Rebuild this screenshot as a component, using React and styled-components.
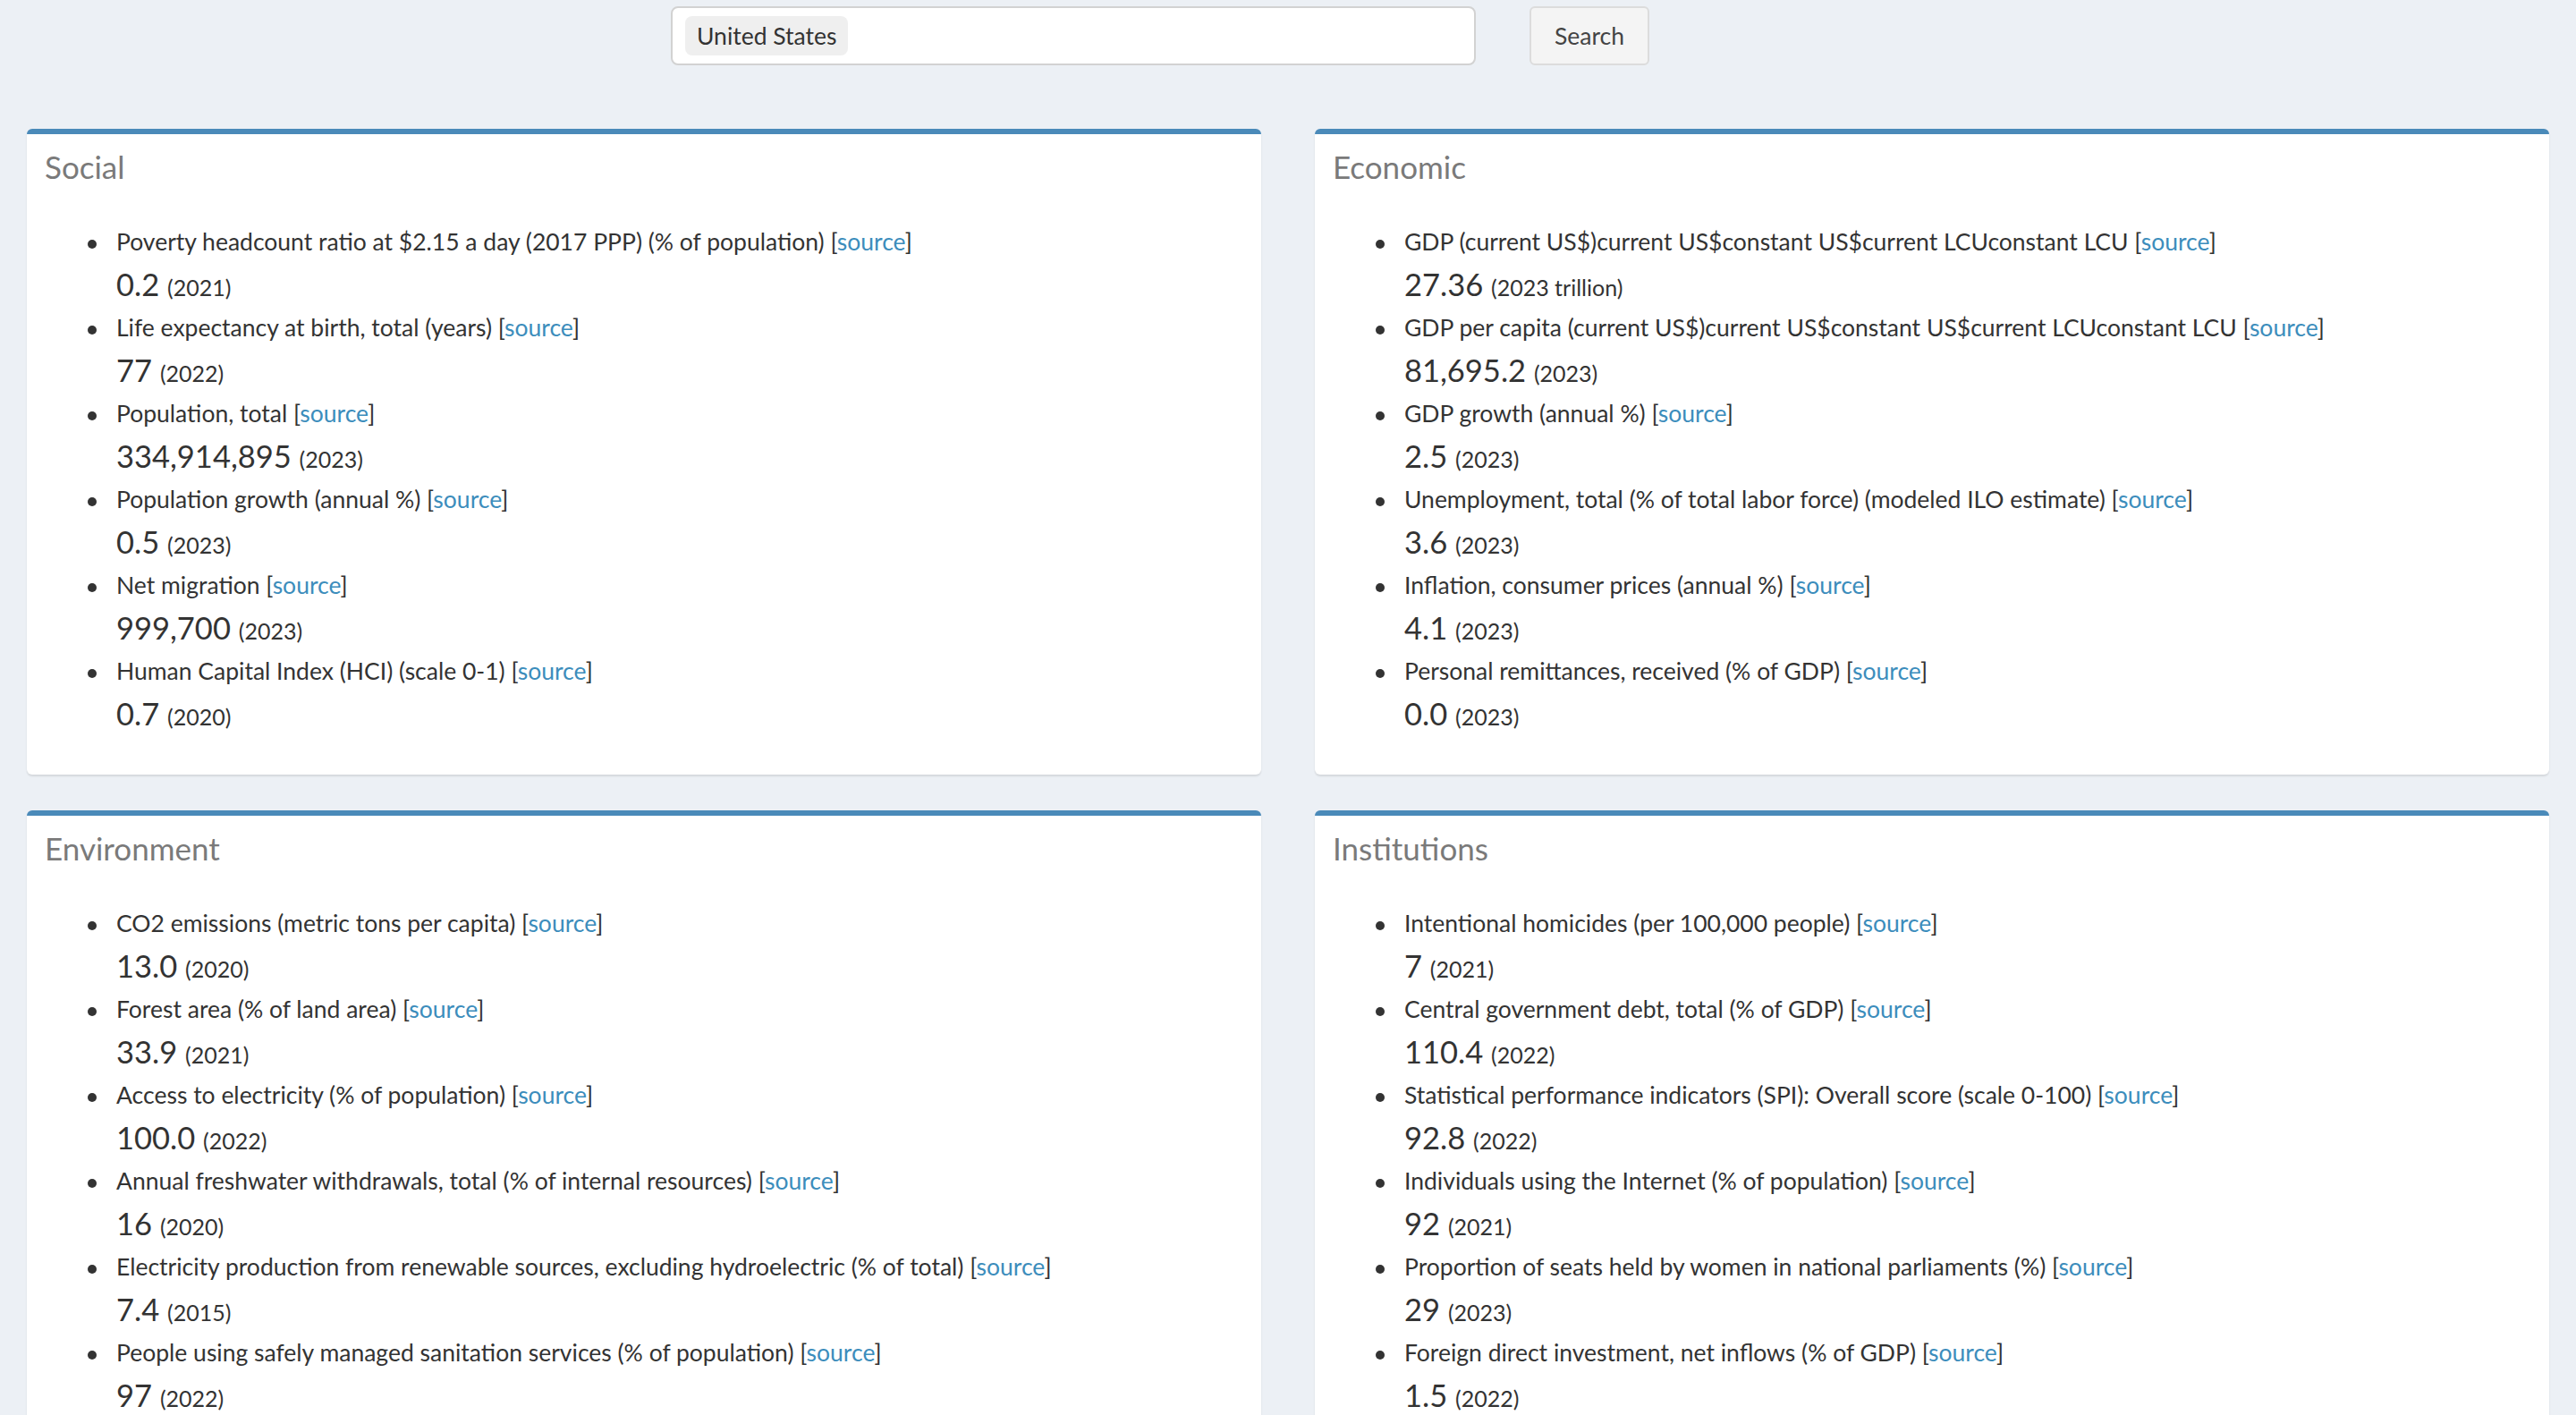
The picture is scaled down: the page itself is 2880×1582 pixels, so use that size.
import styled, { createGlobalStyle } from 'styled-components'

const GlobalStyle = createGlobalStyle`
  html, body {
    margin: 0;
    padding: 0;
    background: #ecf0f5;
  }
  body {
    font-family: Lato, "Open Sans", sans-serif;
    color: #333;
  }
`

const sections = [
  {
    title: 'Social',
    items: [
      { label: 'Poverty headcount ratio at $2.15 a day (2017 PPP) (% of population)', value: '0.2', note: '2021' },
      { label: 'Life expectancy at birth, total (years)', value: '77', note: '2022' },
      { label: 'Population, total', value: '334,914,895', note: '2023' },
      { label: 'Population growth (annual %)', value: '0.5', note: '2023' },
      { label: 'Net migration', value: '999,700', note: '2023' },
      { label: 'Human Capital Index (HCI) (scale 0-1)', value: '0.7', note: '2020' },
    ],
  },
  {
    title: 'Economic',
    items: [
      { label: 'GDP (current US$)current US$constant US$current LCUconstant LCU', value: '27.36', note: '2023 trillion' },
      { label: 'GDP per capita (current US$)current US$constant US$current LCUconstant LCU', value: '81,695.2', note: '2023' },
      { label: 'GDP growth (annual %)', value: '2.5', note: '2023' },
      { label: 'Unemployment, total (% of total labor force) (modeled ILO estimate)', value: '3.6', note: '2023' },
      { label: 'Inflation, consumer prices (annual %)', value: '4.1', note: '2023' },
      { label: 'Personal remittances, received (% of GDP)', value: '0.0', note: '2023' },
    ],
  },
  {
    title: 'Environment',
    items: [
      { label: 'CO2 emissions (metric tons per capita)', value: '13.0', note: '2020' },
      { label: 'Forest area (% of land area)', value: '33.9', note: '2021' },
      { label: 'Access to electricity (% of population)', value: '100.0', note: '2022' },
      { label: 'Annual freshwater withdrawals, total (% of internal resources)', value: '16', note: '2020' },
      { label: 'Electricity production from renewable sources, excluding hydroelectric (% of total)', value: '7.4', note: '2015' },
      { label: 'People using safely managed sanitation services (% of population)', value: '97', note: '2022' },
    ],
  },
  {
    title: 'Institutions',
    items: [
      { label: 'Intentional homicides (per 100,000 people)', value: '7', note: '2021' },
      { label: 'Central government debt, total (% of GDP)', value: '110.4', note: '2022' },
      { label: 'Statistical performance indicators (SPI): Overall score (scale 0-100)', value: '92.8', note: '2022' },
      { label: 'Individuals using the Internet (% of population)', value: '92', note: '2021' },
      { label: 'Proportion of seats held by women in national parliaments (%)', value: '29', note: '2023' },
      { label: 'Foreign direct investment, net inflows (% of GDP)', value: '1.5', note: '2022' },
    ],
  },
]

function App() {
  return (
    <Page>
      <GlobalStyle />
      <SearchRow>
        <Spacer />
        <Col>
          <SearchBox>
            <Chip>United States</Chip>
          </SearchBox>
        </Col>
        <Col>
          <SearchButton type='button'>Search</SearchButton>
        </Col>
      </SearchRow>

      <Grid>
        {sections.map((s) => (
          <Box key={s.title}>
            <BoxHeader>
              <BoxTitle>{s.title}</BoxTitle>
            </BoxHeader>
            <BoxBody>
              <List>
                {s.items.map((it) => (
                  <Item key={it.label}>
                    {it.label} [<SourceLink href='#'>source</SourceLink>]
                    <ValueLine>
                      <Num>{it.value}</Num> <Note>({it.note})</Note>
                    </ValueLine>
                  </Item>
                ))}
              </List>
            </BoxBody>
          </Box>
        ))}
      </Grid>
    </Page>
  )
}

export default App

const Page = styled.div`
  padding: 7px 30px 0;
  min-height: 100vh;
  box-sizing: border-box;
`

const SearchRow = styled.div`
  display: grid;
  grid-template-columns: 25% 33.3333% 8.3333%;
  margin: 0 -30px;
`

const Spacer = styled.div``

const Col = styled.div`
  padding: 0 30px;
`

const SearchBox = styled.div`
  height: 66px;
  box-sizing: border-box;
  background: #fff;
  border: 2px solid #d2d2d2;
  border-radius: 8px;
  display: flex;
  align-items: center;
  padding: 0 14px;
`

const Chip = styled.span`
  display: inline-flex;
  align-items: center;
  height: 44px;
  padding: 0 13px;
  background: #efefef;
  border-radius: 8px;
  font-size: 26.5px;
  color: #333;
`

const SearchButton = styled.button`
  height: 66px;
  padding: 0 26px;
  background: #f4f4f4;
  border: 2px solid #dcdcdc;
  border-radius: 6px;
  font-family: inherit;
  font-size: 26.5px;
  color: #444;
`

const Grid = styled.div`
  display: grid;
  grid-template-columns: 1fr 1fr;
  column-gap: 60px;
  row-gap: 40px;
  margin-top: 71px;
`

const Box = styled.section`
  background: #fff;
  border-top: 6px solid #4a8ab9;
  border-radius: 6px;
  box-shadow: 0 2px 2px rgba(0, 0, 0, 0.1);
`

const BoxHeader = styled.div`
  padding: 16px 20px 24px;
`

const BoxTitle = styled.h3`
  margin: 0;
  font-size: 35px;
  line-height: 40px;
  font-weight: 400;
  color: #7a7a7a;
`

const BoxBody = styled.div`
  padding: 20px;
`

const List = styled.ul`
  margin: 0 0 20px;
  padding-left: 80px;
  list-style: none;
`

const Item = styled.li`
  position: relative;
  font-size: 26.5px;
  line-height: 40px;
  color: #333;

  /* bullet dot */
  &::before {
    content: '';
    position: absolute;
    left: -32px;
    top: 18px;
    width: 10px;
    height: 10px;
    border-radius: 50%;
    background: #333;
  }
`

const SourceLink = styled.a`
  color: #3c8dbc;
  text-decoration: none;
`

const ValueLine = styled.div`
  font-size: 34.5px;
  line-height: 56px;
`

const Num = styled.span`
  font-size: 34.5px;
`

const Note = styled.span`
  font-size: 25px;
  line-height: 1;
`
